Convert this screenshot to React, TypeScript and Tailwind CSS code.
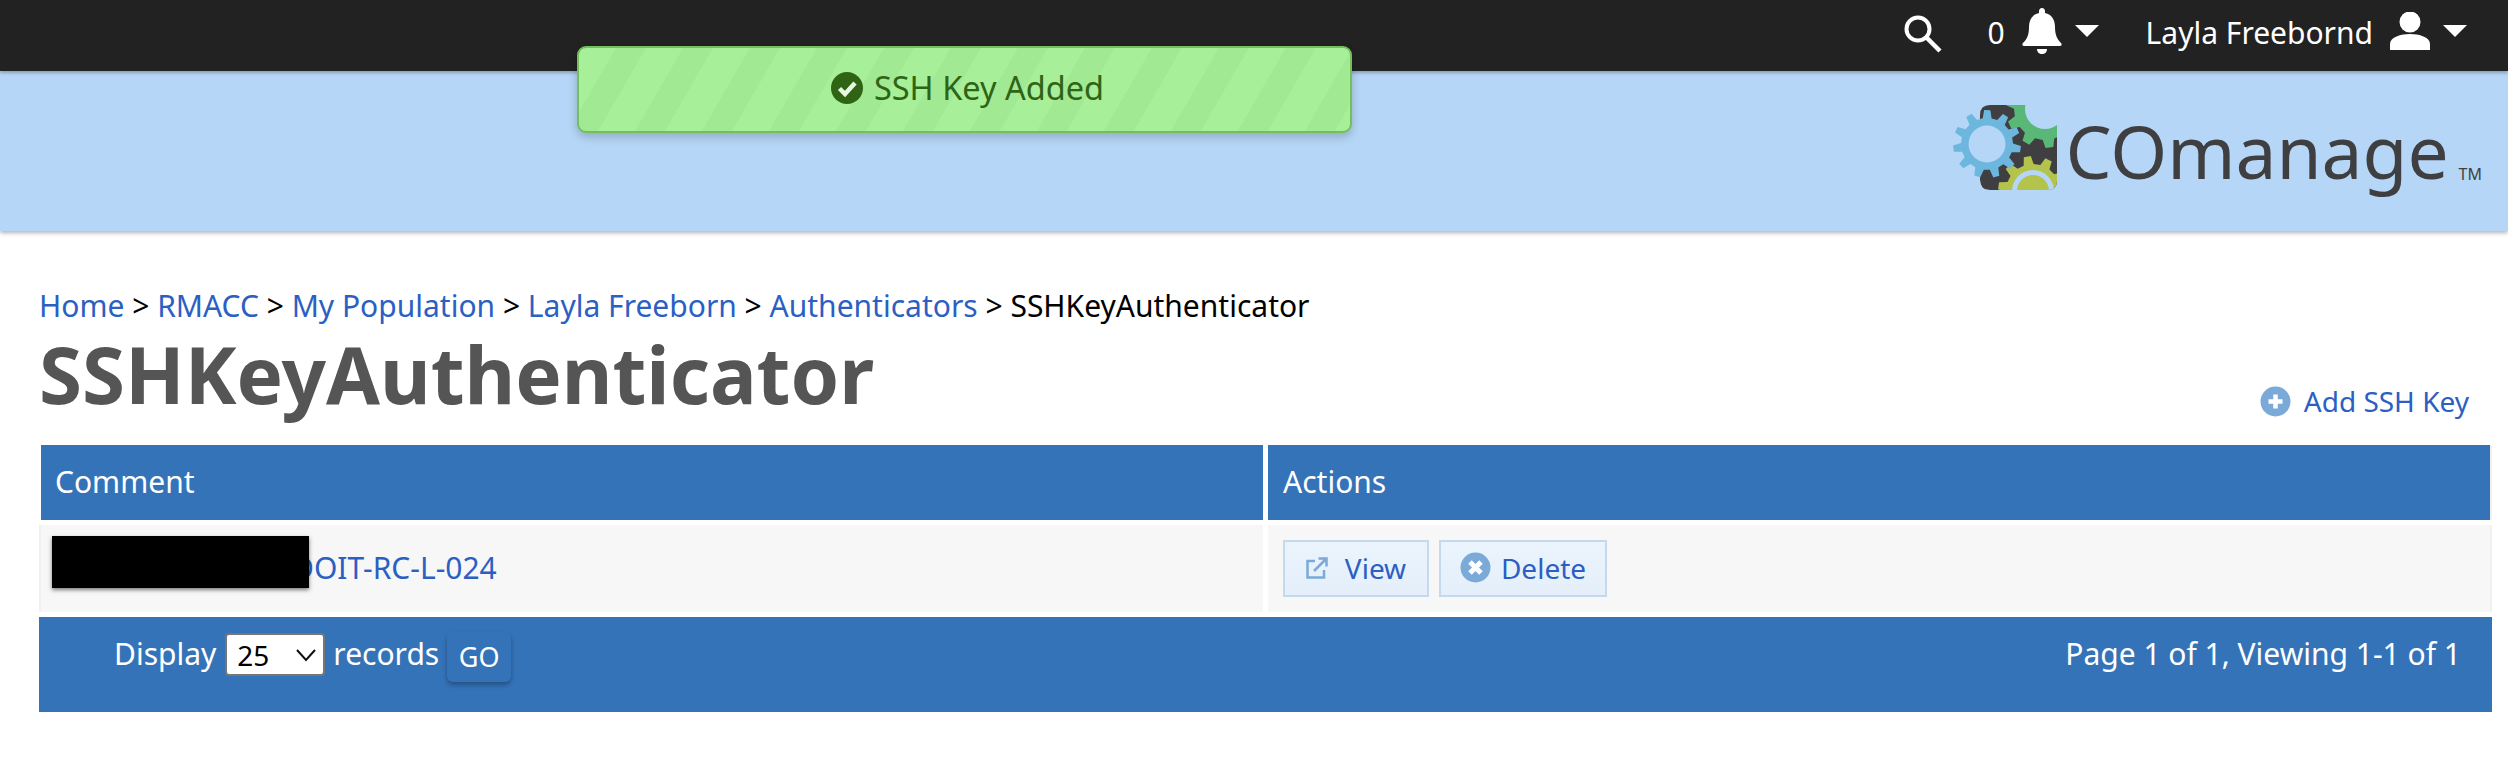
import React from "react";

function gearPath(cx: number, cy: number, rOut: number, rIn: number, teeth: number, rot = 0) {
  const pts: string[] = [];
  for (let i = 0; i < teeth; i++) {
    const a = rot + (i / teeth) * Math.PI * 2;
    const s = (Math.PI * 2) / teeth;
    const offs: [number, number][] = [
      [-0.3, rIn],
      [-0.16, rOut],
      [0.16, rOut],
      [0.3, rIn],
    ];
    for (const [o, r] of offs) {
      const t = a + o * s;
      pts.push(`${(cx + Math.cos(t) * r).toFixed(2)} ${(cy + Math.sin(t) * r).toFixed(2)}`);
    }
  }
  return "M" + pts.join("L") + "Z";
}

function Gears() {
  return (
    <svg width="104" height="86" viewBox="0 0 104 86" className="block shrink-0">
      <defs>
        <clipPath id="logoClip">
          <path d="M27 0 H104 V76 Q104 85 94 85 H37 Q27 85 27 75 Z" />
        </clipPath>
      </defs>
      <g clipPath="url(#logoClip)">
        <path d="M37 0 H81 L104 20 V85 H37 Q27 85 27 75 V10 Q27 0 37 0 Z" fill="#3f3f42" />
        <path d={gearPath(92, 4, 39, 31, 10, 0.2)} fill="#59b878" />
        <circle cx="92" cy="4" r="20" fill="#b5d6f6" />
        <path d={gearPath(80, 86, 35, 27, 10, 0.15)} fill="#b3c34b" />
        <circle cx="80" cy="86" r="21" fill="#b5d6f6" />
        <circle cx="80" cy="86" r="16" fill="#b3c34b" />
      </g>
      <path d={gearPath(34, 39, 34, 26, 11, 0.15)} fill="#6db6de" />
      <circle cx="34" cy="39" r="18.5" fill="#b5d6f6" />
    </svg>
  );
}

function Caret() {
  return <span className="block h-0 w-0 border-x-[12px] border-t-[12px] border-x-transparent border-t-white" />;
}

function Crumb({ children }: { children: React.ReactNode }) {
  return <span className="text-[#2b5fc3]">{children}</span>;
}

export default function App() {
  return (
    <div className="relative min-h-[774px] w-full bg-white font-['Noto_Sans',sans-serif] text-[30px] leading-[40px] text-black">
      <header className="relative flex h-[71px] items-center justify-end bg-[#222222] pr-[41px] text-white shadow-[0_2px_3px_rgba(0,0,0,0.25)]">
        <svg width="38" height="38" viewBox="0 0 38 38" fill="none" stroke="white" className="mr-[45px] mt-[-4px]">
          <circle cx="14" cy="14" r="11.5" strokeWidth="4" />
          <path d="M22 22 L36 36" strokeWidth="4.5" />
        </svg>
        <span className="mr-[17px] mt-[-6px]">0</span>
        <svg width="40" height="46" viewBox="0 0 40 46" fill="white" className="mr-[13px] mt-[-10px]">
          <path d="M20 0 C18 0 17 1.5 17 3.5 V5 C10 6.5 7 12 7 19 C7 27 5 31 1 35 C0 36 0 38 2 38 H38 C40 38 40 36 39 35 C35 31 33 27 33 19 C33 12 30 6.5 23 5 V3.5 C23 1.5 22 0 20 0 Z" />
          <path d="M15 41 H25 C25 44 23 46 20 46 C17 46 15 44 15 41 Z" />
        </svg>
        <span className="mr-[47px] mt-[-10px]"><Caret /></span>
        <span className="mr-[17px] mt-[-6px]">Layla Freebornd</span>
        <svg width="40" height="38" viewBox="0 0 40 38" fill="white" className="mr-[13px] mt-[-10px]">
          <circle cx="20" cy="10" r="10.5" />
          <path d="M0 38 V32 C0 25 11 22 20 22 C29 22 40 25 40 32 V38 Z" />
        </svg>
        <span className="mt-[-10px]"><Caret /></span>
      </header>

      <div className="flex h-[160px] items-start justify-end bg-[#b5d6f6] pr-[26px] pt-[34px] shadow-[0_2px_4px_rgba(0,0,0,0.3)]">
        <Gears />
        <span className="ml-[9px] mt-[-4px] text-[73px] leading-[100px] text-[#3f3f42]">COmanage</span>
        <span className="ml-[10px] mt-[59px] text-[16px] leading-[20px] text-[#3f3f42]">TM</span>
      </div>

      <div className="absolute left-[577px] top-[46px] flex h-[87px] w-[775px] items-center justify-center gap-[11px] rounded-[9px] border-2 border-[#72c05c] bg-[#a6ee98] bg-[repeating-linear-gradient(120deg,#a7ef99_0px,#a7ef99_32px,#a2e994_32px,#a2e994_58px)] pb-[3px] pl-[6px] text-[32.5px] text-[#2e6414] shadow-[0_4px_10px_rgba(0,0,0,0.2)]">
        <svg width="32" height="32" viewBox="0 0 32 32">
          <circle cx="16" cy="16" r="16" fill="#2e6414" />
          <path d="M8.5 16.5 L14 22 L24 11" fill="none" stroke="#e8f8e0" strokeWidth="4.5" />
        </svg>
        <span>SSH Key Added</span>
      </div>

      <main className="pl-[39px] pr-[16px] pt-[55px]">
        <nav className="whitespace-nowrap">
          <Crumb>Home</Crumb> &gt; <Crumb>RMACC</Crumb> &gt; <Crumb>My Population</Crumb> &gt; <Crumb>Layla Freeborn</Crumb> &gt; <Crumb>Authenticators</Crumb> &gt; SSHKeyAuthenticator
        </nav>
        <div className="flex items-end justify-between">
          <h1 className="text-[78px] font-bold leading-[96px] text-[#555555]">SSHKeyAuthenticator</h1>
          <div className="mb-[1px] mr-[23px] flex items-center gap-[13px] text-[28px] text-[#2b5fc3]">
            <svg width="31" height="31" viewBox="0 0 31 31">
              <circle cx="15.5" cy="15.5" r="15" fill="#7ba9d8" />
              <path d="M15.5 8.5 V22.5 M8.5 15.5 H22.5" stroke="white" strokeWidth="4.5" />
            </svg>
            <span>Add SSH Key</span>
          </div>
        </div>

        <div className="mt-[23px] flex h-[75px] items-center gap-[5px] border-r-2 border-[#f0f0f0] pl-[2px]">
          <div className="flex h-full w-[1222px] items-center bg-[#3573b9] pb-[2px] pl-[14px] text-white">Comment</div>
          <div className="flex h-full flex-1 items-center bg-[#3573b9] pb-[2px] pl-[15px] text-white">Actions</div>
        </div>

        <div className="mt-[5px] flex h-[87px] gap-[5px] border-x-2 border-[#f0f0f0]">
          <div className="relative flex w-[1222px] items-center bg-[#f7f7f7] pb-[2px] pl-[251px] text-[#2b5fc3]">
            <span>DOIT-RC-L-024</span>
            <div className="absolute left-[11px] top-[11px] h-[52px] w-[257px] bg-black shadow-[0_2px_4px_rgba(0,0,0,0.5)]" />
          </div>
          <div className="flex flex-1 items-center gap-[10px] bg-[#f7f7f7] pl-[15px] text-[28px] text-[#2b5fc3]">
            <span className="flex h-[57px] w-[146px] items-center justify-center gap-[17px] border-2 border-[#c5d9ec] bg-linear-to-b from-[#ebf4fd] to-[#e4effa] pb-[2px]">
              <svg width="22" height="22" viewBox="0 0 22 22" fill="none" stroke="#7ba9d8" strokeWidth="2.5">
                <path d="M9 4 H1.5 V20.5 H18 V13" />
                <path d="M8 14 L20 2 M12.5 1.5 H20.5 V9.5" />
              </svg>
              <span>View</span>
            </span>
            <span className="flex h-[57px] w-[168px] items-center justify-center gap-[10px] border-2 border-[#c5d9ec] bg-linear-to-b from-[#ebf4fd] to-[#e4effa] pb-[2px]">
              <svg width="31" height="31" viewBox="0 0 31 31">
                <circle cx="15.5" cy="15.5" r="15" fill="#7ba9d8" />
                <path d="M10 10 L21 21 M21 10 L10 21" stroke="white" strokeWidth="5" />
              </svg>
              <span>Delete</span>
            </span>
          </div>
        </div>

        <div className="mt-[5px] flex h-[95px] items-start justify-between bg-[#3573b9] pl-[75px] pr-[31px] pt-[15px] text-white">
          <div className="flex items-start">
            <span className="mt-[2px]">Display</span>
            <div className="relative ml-[9px] mt-[1px]">
              <select defaultValue="25" className="block h-[43px] w-[100px] appearance-none rounded-[4px] border-2 border-[#767676] bg-white pl-[10px] text-[28px] leading-[36px] text-black">
                <option>25</option>
              </select>
              <svg width="22" height="14" viewBox="0 0 22 14" fill="none" stroke="#111" strokeWidth="2" className="pointer-events-none absolute right-[8px] top-[15px]">
                <path d="M2 2 L11 12 L20 2" />
              </svg>
            </div>
            <span className="ml-[8px] mt-[2px]">records</span>
            <button className="ml-[8px] h-[50px] w-[64px] rounded-[6px] bg-[#3573b9] text-[27px] text-white shadow-[0_3px_5px_rgba(0,0,0,0.3)]">GO</button>
          </div>
          <span className="mt-[2px]">Page 1 of 1, Viewing 1-1 of 1</span>
        </div>
      </main>
    </div>
  );
}
